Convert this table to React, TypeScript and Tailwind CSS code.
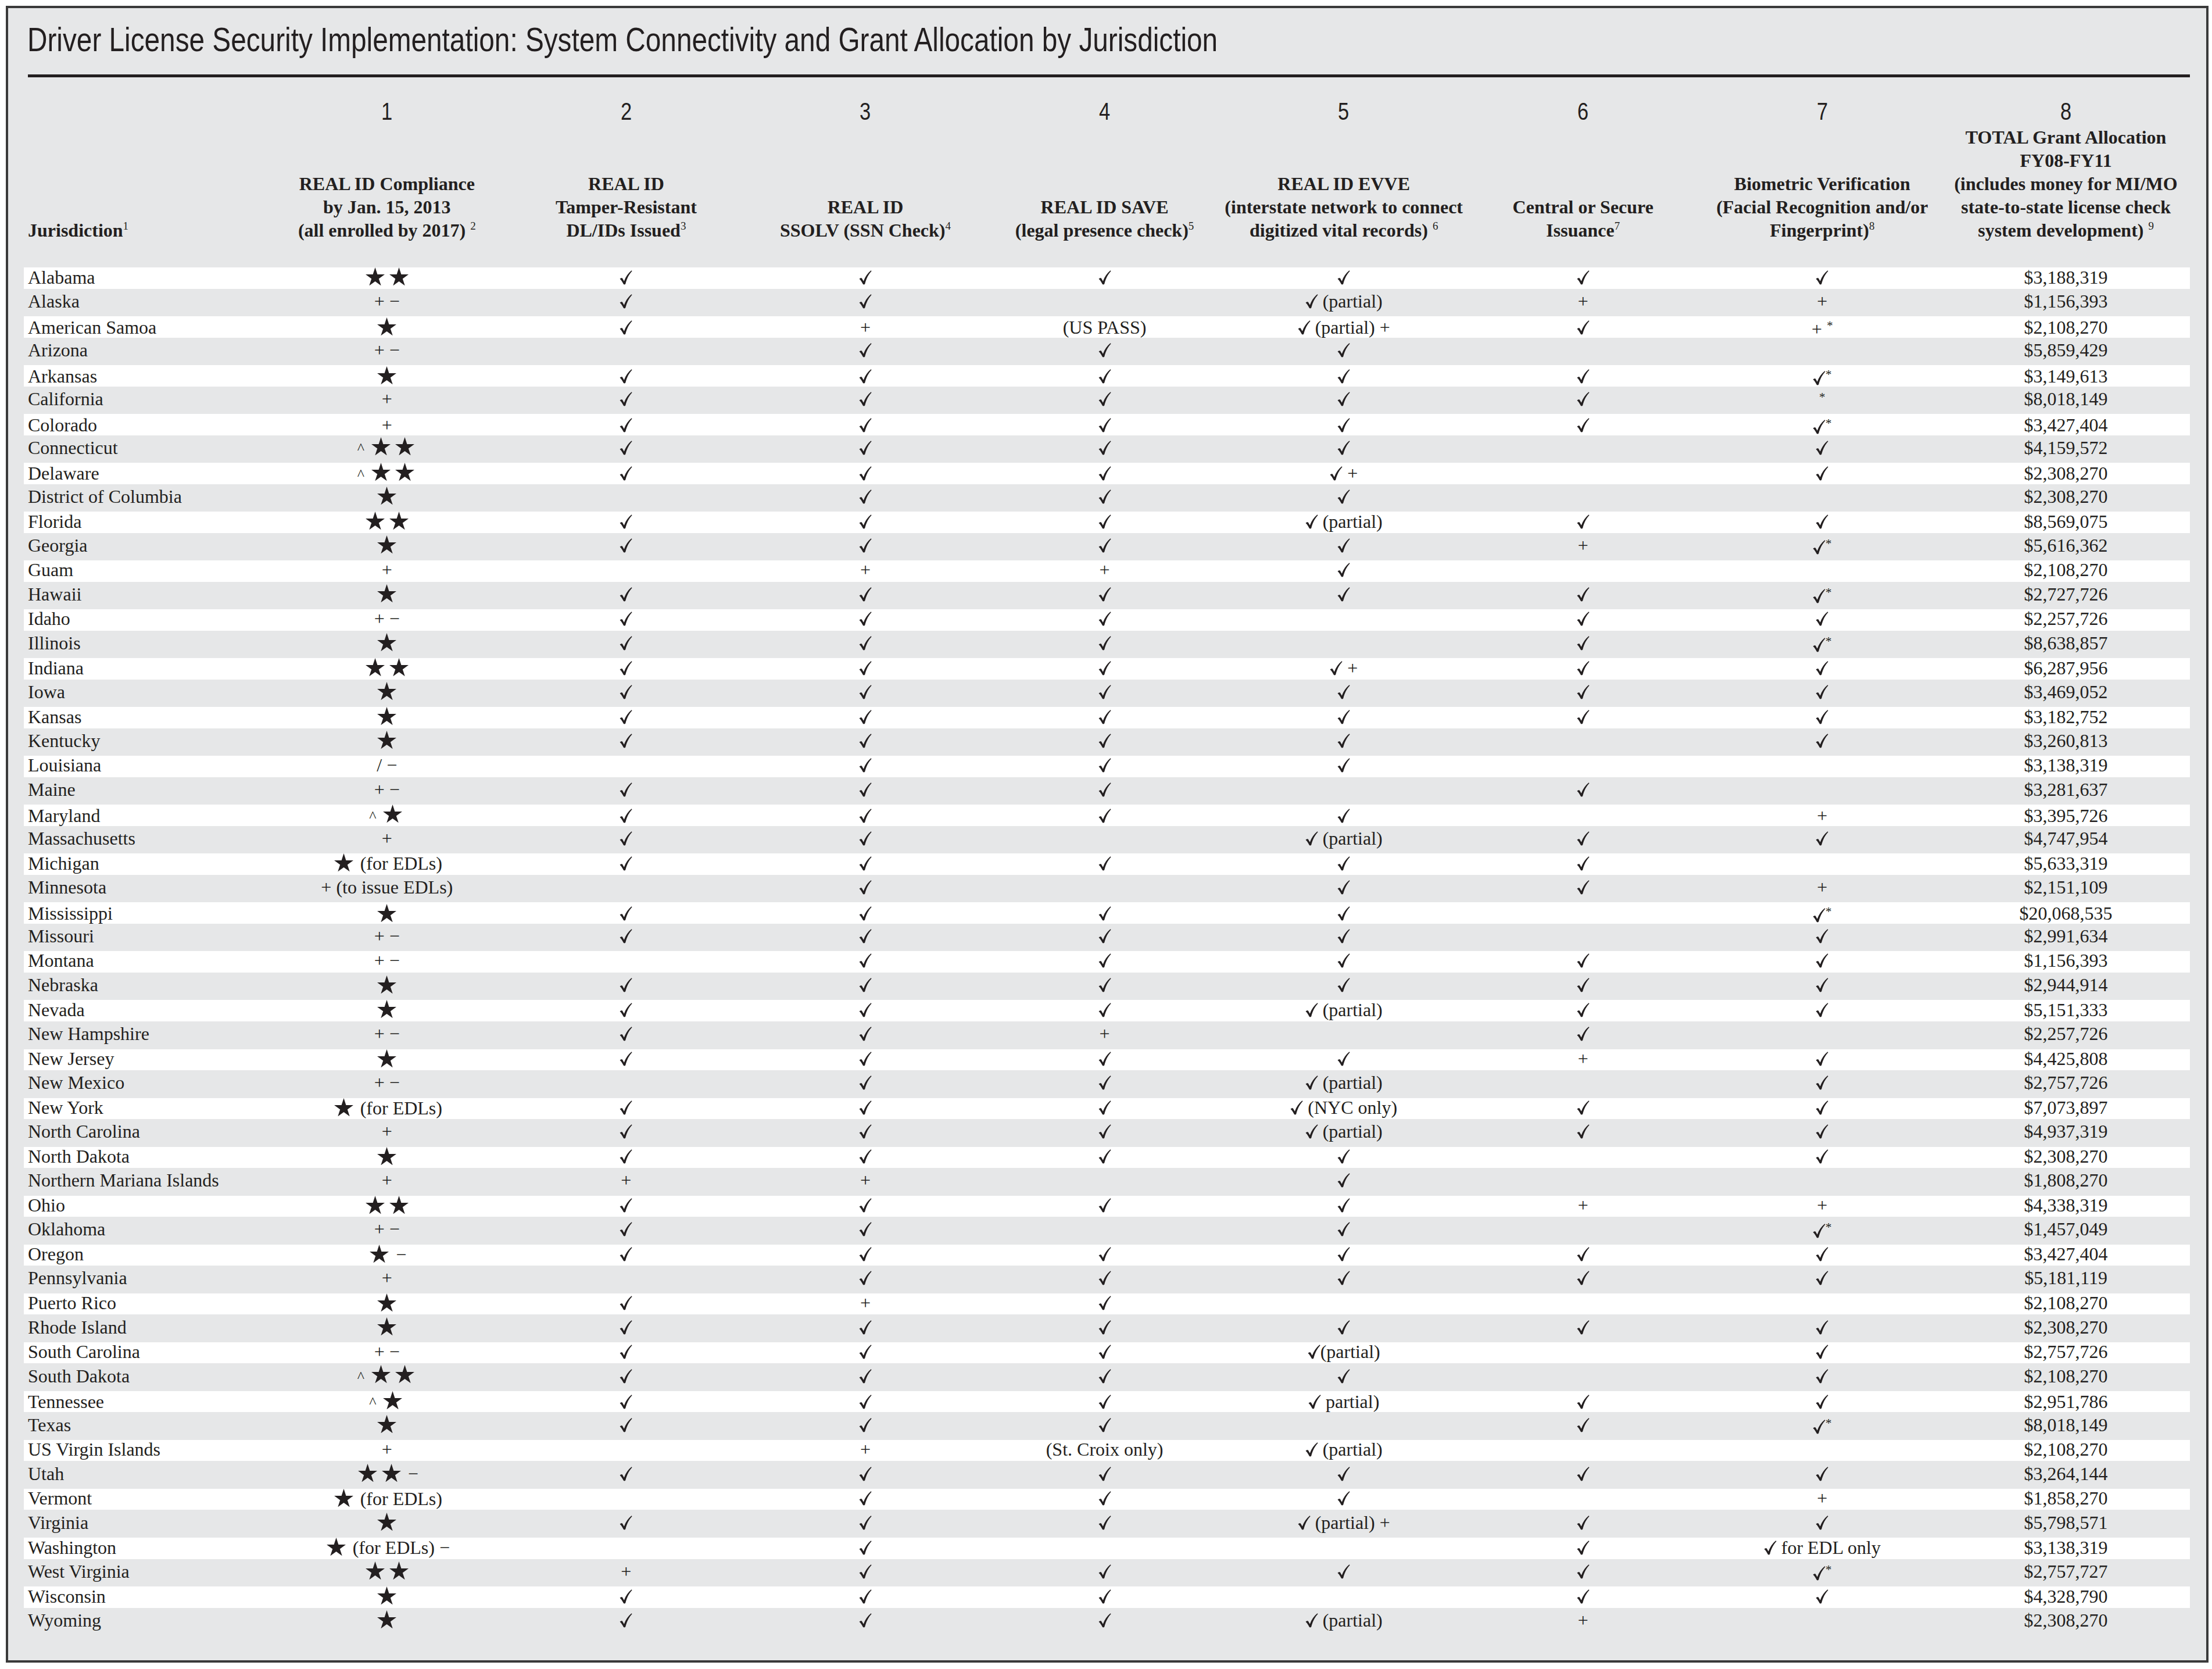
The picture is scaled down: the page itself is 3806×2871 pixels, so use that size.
import React from "react";

const rows: string[][] = [
  ["Alabama", "★★", "✓", "✓", "✓", "✓", "✓", "✓", "$3,188,319"],
  ["Alaska", "+ −", "✓", "✓", "", "✓ (partial)", "+", "+", "$1,156,393"],
  ["American Samoa", "★", "✓", "+", "(US PASS)", "✓ (partial) +", "✓", "+ *", "$2,108,270"],
  ["Arizona", "+ −", "", "✓", "✓", "✓", "", "", "$5,859,429"],
  ["Arkansas", "★", "✓", "✓", "✓", "✓", "✓", "✓*", "$3,149,613"],
  ["California", "+", "✓", "✓", "✓", "✓", "✓", "*", "$8,018,149"],
  ["Colorado", "+", "✓", "✓", "✓", "✓", "✓", "✓*", "$3,427,404"],
  ["Connecticut", "^ ★★", "✓", "✓", "✓", "✓", "", "✓", "$4,159,572"],
  ["Delaware", "^ ★★", "✓", "✓", "✓", "✓ +", "", "✓", "$2,308,270"],
  ["District of Columbia", "★", "", "✓", "✓", "✓", "", "", "$2,308,270"],
  ["Florida", "★★", "✓", "✓", "✓", "✓ (partial)", "✓", "✓", "$8,569,075"],
  ["Georgia", "★", "✓", "✓", "✓", "✓", "+", "✓*", "$5,616,362"],
  ["Guam", "+", "", "+", "+", "✓", "", "", "$2,108,270"],
  ["Hawaii", "★", "✓", "✓", "✓", "✓", "✓", "✓*", "$2,727,726"],
  ["Idaho", "+ −", "✓", "✓", "✓", "", "✓", "✓", "$2,257,726"],
  ["Illinois", "★", "✓", "✓", "✓", "", "✓", "✓*", "$8,638,857"],
  ["Indiana", "★★", "✓", "✓", "✓", "✓ +", "✓", "✓", "$6,287,956"],
  ["Iowa", "★", "✓", "✓", "✓", "✓", "✓", "✓", "$3,469,052"],
  ["Kansas", "★", "✓", "✓", "✓", "✓", "✓", "✓", "$3,182,752"],
  ["Kentucky", "★", "✓", "✓", "✓", "✓", "", "✓", "$3,260,813"],
  ["Louisiana", "/ −", "", "✓", "✓", "✓", "", "", "$3,138,319"],
  ["Maine", "+ −", "✓", "✓", "✓", "", "✓", "", "$3,281,637"],
  ["Maryland", "^ ★", "✓", "✓", "✓", "✓", "", "+", "$3,395,726"],
  ["Massachusetts", "+", "✓", "✓", "", "✓ (partial)", "✓", "✓", "$4,747,954"],
  ["Michigan", "★ (for EDLs)", "✓", "✓", "✓", "✓", "✓", "", "$5,633,319"],
  ["Minnesota", "+ (to issue EDLs)", "", "✓", "", "✓", "✓", "+", "$2,151,109"],
  ["Mississippi", "★", "✓", "✓", "✓", "✓", "", "✓*", "$20,068,535"],
  ["Missouri", "+ −", "✓", "✓", "✓", "✓", "", "✓", "$2,991,634"],
  ["Montana", "+ −", "", "✓", "✓", "✓", "✓", "✓", "$1,156,393"],
  ["Nebraska", "★", "✓", "✓", "✓", "✓", "✓", "✓", "$2,944,914"],
  ["Nevada", "★", "✓", "✓", "✓", "✓ (partial)", "✓", "✓", "$5,151,333"],
  ["New Hampshire", "+ −", "✓", "✓", "+", "", "✓", "", "$2,257,726"],
  ["New Jersey", "★", "✓", "✓", "✓", "✓", "+", "✓", "$4,425,808"],
  ["New Mexico", "+ −", "", "✓", "✓", "✓ (partial)", "", "✓", "$2,757,726"],
  ["New York", "★ (for EDLs)", "✓", "✓", "✓", "✓ (NYC only)", "✓", "✓", "$7,073,897"],
  ["North Carolina", "+", "✓", "✓", "✓", "✓ (partial)", "✓", "✓", "$4,937,319"],
  ["North Dakota", "★", "✓", "✓", "✓", "✓", "", "✓", "$2,308,270"],
  ["Northern Mariana Islands", "+", "+", "+", "", "✓", "", "", "$1,808,270"],
  ["Ohio", "★★", "✓", "✓", "✓", "✓", "+", "+", "$4,338,319"],
  ["Oklahoma", "+ −", "✓", "✓", "", "✓", "", "✓*", "$1,457,049"],
  ["Oregon", "★ −", "✓", "✓", "✓", "✓", "✓", "✓", "$3,427,404"],
  ["Pennsylvania", "+", "", "✓", "✓", "✓", "✓", "✓", "$5,181,119"],
  ["Puerto Rico", "★", "✓", "+", "✓", "", "", "", "$2,108,270"],
  ["Rhode Island", "★", "✓", "✓", "✓", "✓", "✓", "✓", "$2,308,270"],
  ["South Carolina", "+ −", "✓", "✓", "✓", "✓(partial)", "", "✓", "$2,757,726"],
  ["South Dakota", "^ ★★", "✓", "✓", "✓", "✓", "", "✓", "$2,108,270"],
  ["Tennessee", "^ ★", "✓", "✓", "✓", "✓ partial)", "✓", "✓", "$2,951,786"],
  ["Texas", "★", "✓", "✓", "✓", "", "✓", "✓*", "$8,018,149"],
  ["US Virgin Islands", "+", "", "+", "(St. Croix only)", "✓ (partial)", "", "", "$2,108,270"],
  ["Utah", "★★ −", "✓", "✓", "✓", "✓", "✓", "✓", "$3,264,144"],
  ["Vermont", "★ (for EDLs)", "", "✓", "✓", "✓", "", "+", "$1,858,270"],
  ["Virginia", "★", "✓", "✓", "✓", "✓ (partial) +", "✓", "✓", "$5,798,571"],
  ["Washington", "★ (for EDLs) −", "", "✓", "", "", "✓", "✓ for EDL only", "$3,138,319"],
  ["West Virginia", "★★", "+", "✓", "✓", "✓", "✓", "✓*", "$2,757,727"],
  ["Wisconsin", "★", "✓", "✓", "✓", "", "✓", "✓", "$4,328,790"],
  ["Wyoming", "★", "✓", "✓", "✓", "✓ (partial)", "+", "", "$2,308,270"],
];

type Head = { lines: string[]; sup: string };
const heads: Head[] = [
  { lines: ["REAL ID Compliance", "by Jan. 15, 2013", "(all enrolled by 2017) "], sup: "2" },
  { lines: ["REAL ID", "Tamper-Resistant", "DL/IDs Issued"], sup: "3" },
  { lines: ["REAL ID", "SSOLV (SSN Check)"], sup: "4" },
  { lines: ["REAL ID SAVE", "(legal presence check)"], sup: "5" },
  { lines: ["REAL ID EVVE", "(interstate network to connect", "digitized vital records) "], sup: "6" },
  { lines: ["Central or Secure", "Issuance"], sup: "7" },
  { lines: ["Biometric Verification", "(Facial Recognition and/or", "Fingerprint)"], sup: "8" },
  {
    lines: [
      "TOTAL Grant Allocation",
      "FY08-FY11",
      "(includes money for MI/MO",
      "state-to-state license check",
      "system development) ",
    ],
    sup: "9",
  },
];

function Star() {
  return (
    <svg
      viewBox="0 0 100 95.2"
      className="inline-block w-[33px] h-[31.4px] mx-[4px] align-[-3px]"
      fill="#231f20"
    >
      <polygon points="50,0 61.81,36.34 100,36.35 69.12,58.81 80.92,95.15 50,72.7 19.08,95.15 30.88,58.81 0,36.35 38.19,36.34" />
    </svg>
  );
}

function Check() {
  return (
    <svg viewBox="0 0 22 25" className="inline-block w-[22px] h-[25px] align-[-2px]" fill="#231f20">
      <path d="M0.5 14.8 C1.8 13.4 3.4 12.8 4.8 13.6 L7.8 18.8 C10.8 10.8 14.8 4.8 20.6 0.3 L21.6 1.3 C16.4 6.8 12.6 14 10.2 23.4 C9.4 24.8 7.6 24.9 6.8 23.8 C5.1 20.4 3 16.9 0.5 14.8 Z" />
    </svg>
  );
}

function renderCell(v: string) {
  const parts = v.split(/(★|✓|\*)/).filter((p) => p !== "");
  return parts.map((p, i) => {
    if (p === "★") return <Star key={i} />;
    if (p === "✓") return <Check key={i} />;
    if (p === "*")
      return (
        <span key={i} className="text-[21px] align-[10px]">
          *
        </span>
      );
    if (p.startsWith("^"))
      return (
        <span key={i}>
          <span className="text-[26px]">^</span>
          {p.slice(1)}
        </span>
      );
    return <span key={i}>{p}</span>;
  });
}

const GRID = "grid grid-cols-[419px_repeat(7,411.6px)_1fr]";

export default function App() {
  return (
    <div className="w-[3806px] h-[2871px] bg-white pt-[10px] pl-[10px] text-[#231f20]">
      <div className="w-[3790px] h-[2850px] border-4 border-[#3a3a3a] bg-[#e6e7e8] pl-[27px] pr-[28px] flex flex-col">
        {/* Title */}
        <div className="mt-[25px] h-[58px] ml-[6px] font-['Liberation_Sans',Arial,sans-serif] text-[58px] leading-[58px] whitespace-nowrap">
          <span className="inline-block origin-left [transform:scaleX(0.823)]">
            Driver License Security Implementation: System Connectivity and Grant Allocation by Jurisdiction
          </span>
        </div>
        {/* Rule */}
        <div className="mt-[31px] h-[5px] ml-[7px] bg-[#231f20]" />
        {/* Column numbers */}
        <div className={`${GRID} mt-[38px] h-[42px] font-['Liberation_Sans',Arial,sans-serif] text-[42px] leading-[42px]`}>
          <div />
          {["1", "2", "3", "4", "5", "6", "7", "8"].map((n) => (
            <div key={n} className="text-center">
              <span className="inline-block origin-center [transform:scaleX(0.82)]">{n}</span>
            </div>
          ))}
        </div>
        {/* Header labels */}
        <div
          className={`${GRID} h-[203px] items-end font-['Liberation_Serif','Times_New_Roman',serif] font-bold text-[32px] leading-[40px]`}
        >
          <div className="pl-[7px] whitespace-nowrap">
            Jurisdiction
            <span className="text-[19px] font-normal align-[12px] leading-none">1</span>
          </div>
          {heads.map((h, i) => (
            <div key={i} className="flex flex-col items-center text-center whitespace-nowrap">
              {h.lines.map((l, j) => (
                <div key={j}>
                  {l}
                  {j === h.lines.length - 1 && (
                    <span className="text-[19px] font-normal align-[12px] leading-none">{h.sup}</span>
                  )}
                </div>
              ))}
            </div>
          ))}
        </div>
        {/* Rows */}
        <div className="mt-[44px] flex flex-col font-['Liberation_Serif','Times_New_Roman',serif] text-[32px] leading-[32px]">
          {rows.map((r, i) => (
            <div
              key={r[0]}
              className={`${GRID} items-center pb-[5px] ${i % 2 === 0 ? "h-[36.7px] bg-white" : "h-[47.35px]"}`}
            >
              <div className="pl-[7px] whitespace-nowrap">{r[0]}</div>
              {r.slice(1).map((c, j) => (
                <div key={j} className="text-center whitespace-nowrap">
                  {renderCell(c)}
                </div>
              ))}
            </div>
          ))}
        </div>
      </div>
    </div>
  );
}
